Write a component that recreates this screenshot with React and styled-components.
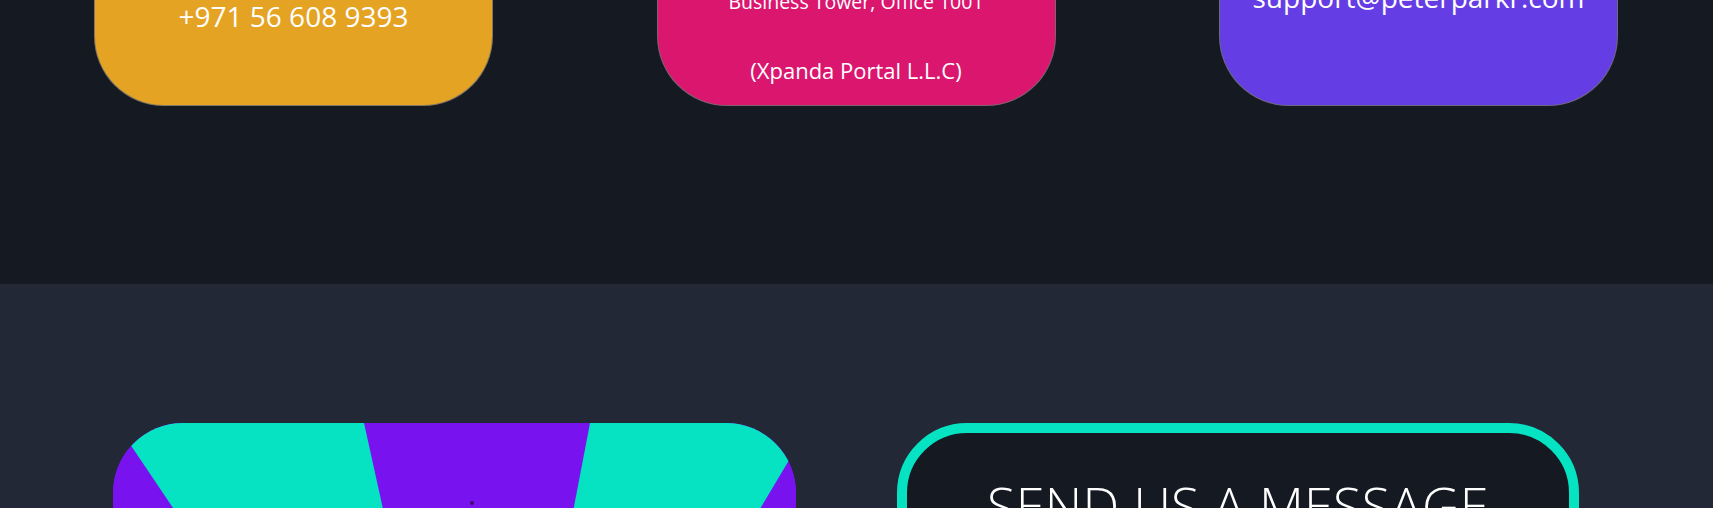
import React from "react";
import styled, { createGlobalStyle } from "styled-components";

const GlobalStyle = createGlobalStyle`
  html, body {
    margin: 0;
    padding: 0;
    overflow: hidden;
    background: #151922;
  }
  body {
    font-family: "Open Sans", "Noto Sans", sans-serif;
  }
`;

const Page = styled.main`
  margin-top: -194px;
`;

const TopSection = styled.section`
  background: #151922;
  padding: 0 95px 178px 94px;
  display: grid;
  grid-template-columns: repeat(3, 399px);
  justify-content: space-between;
`;

const ContactCard = styled.div`
  box-sizing: border-box;
  height: 300px;
  background: ${(p) => p.$bg};
  border: 1px solid rgba(112, 112, 112, 0.85);
  border-radius: 70px;
  display: flex;
  flex-direction: column;
  justify-content: flex-end;
  align-items: center;
  padding: 0 10px ${(p) => p.$pb}px;
  color: #ffffff;
  text-align: center;
`;

const CardTitle = styled.h3`
  margin: 0 0 14px;
  font-size: 28px;
  font-weight: 600;
`;

const ValueText = styled.p`
  margin: ${(p) => p.$mt || 0}px 0 0;
  font-size: ${(p) => p.$size}px;
  line-height: ${(p) => p.$lh}px;
  font-weight: 400;
  white-space: nowrap;
`;

const LowerSection = styled.section`
  background: #222836;
  padding: 139px 134px 80px 113px;
  display: grid;
  grid-template-columns: 683px 682px;
  column-gap: 101px;
`;

const ImageCard = styled.div`
  height: 560px;
  border-radius: 70px;
  overflow: hidden;
  background: #7813ef;
`;

const BurstSvg = styled.svg`
  display: block;
  width: 100%;
  height: 100%;
`;

const MessageCard = styled.div`
  box-sizing: border-box;
  height: 560px;
  border: 10px solid #05e3c3;
  border-radius: 70px;
  background: #151922;
  padding-top: 37px;
  text-align: center;
`;

const MessageTitle = styled.h2`
  margin: 0;
  color: #ffffff;
  font-size: 52px;
  line-height: 70px;
  font-weight: 300;
  letter-spacing: 0.3px;
  white-space: nowrap;
`;

const CX = 372;
const CY = 548;
const R = 2400;
const tealWedges = [
  [-33.97, -12.45],
  [10.85, 30.76],
  [-79, -56.5],
  [53.3, 75.8],
  [-124, -101.5],
  [98.3, 120.8],
  [143.3, 165.8],
  [-169, -146.5],
];

const pt = (deg) => {
  const r = (deg * Math.PI) / 180;
  return `${(CX + R * Math.sin(r)).toFixed(1)},${(CY - R * Math.cos(r)).toFixed(1)}`;
};

function Sunburst() {
  return (
    <BurstSvg viewBox="0 0 683 560" preserveAspectRatio="none">
      <rect width="683" height="560" fill="#7813ef" />
      {tealWedges.map(([a, b], i) => (
        <polygon
          key={i}
          points={`${CX},${CY} ${pt(a)} ${pt((a + b) / 2)} ${pt(b)}`}
          fill="#05e3c3"
        />
      ))}
      <circle cx="359" cy="80" r="2" fill="#3d0a6e" />
    </BurstSvg>
  );
}

export default function App() {
  return (
    <>
      <GlobalStyle />
      <Page>
        <TopSection>
          <ContactCard $bg="#e5a323" $pb={70}>
            <CardTitle>Phone</CardTitle>
            <ValueText $size={28} $lh={38}>+971 56 608 9393</ValueText>
          </ContactCard>
          <ContactCard $bg="#da166f" $pb={20}>
            <CardTitle>Address</CardTitle>
            <ValueText $size={19.5} $lh={26}>Business Tower, Office 1001</ValueText>
            <ValueText $size={22} $lh={30} $mt={40}>(Xpanda Portal L.L.C)</ValueText>
          </ContactCard>
          <ContactCard $bg="#653de5" $pb={89}>
            <CardTitle>Email</CardTitle>
            <ValueText $size={28} $lh={38}>support@peterparkr.com</ValueText>
          </ContactCard>
        </TopSection>
        <LowerSection>
          <ImageCard>
            <Sunburst />
          </ImageCard>
          <MessageCard>
            <MessageTitle>SEND US A MESSAGE</MessageTitle>
          </MessageCard>
        </LowerSection>
      </Page>
    </>
  );
}
